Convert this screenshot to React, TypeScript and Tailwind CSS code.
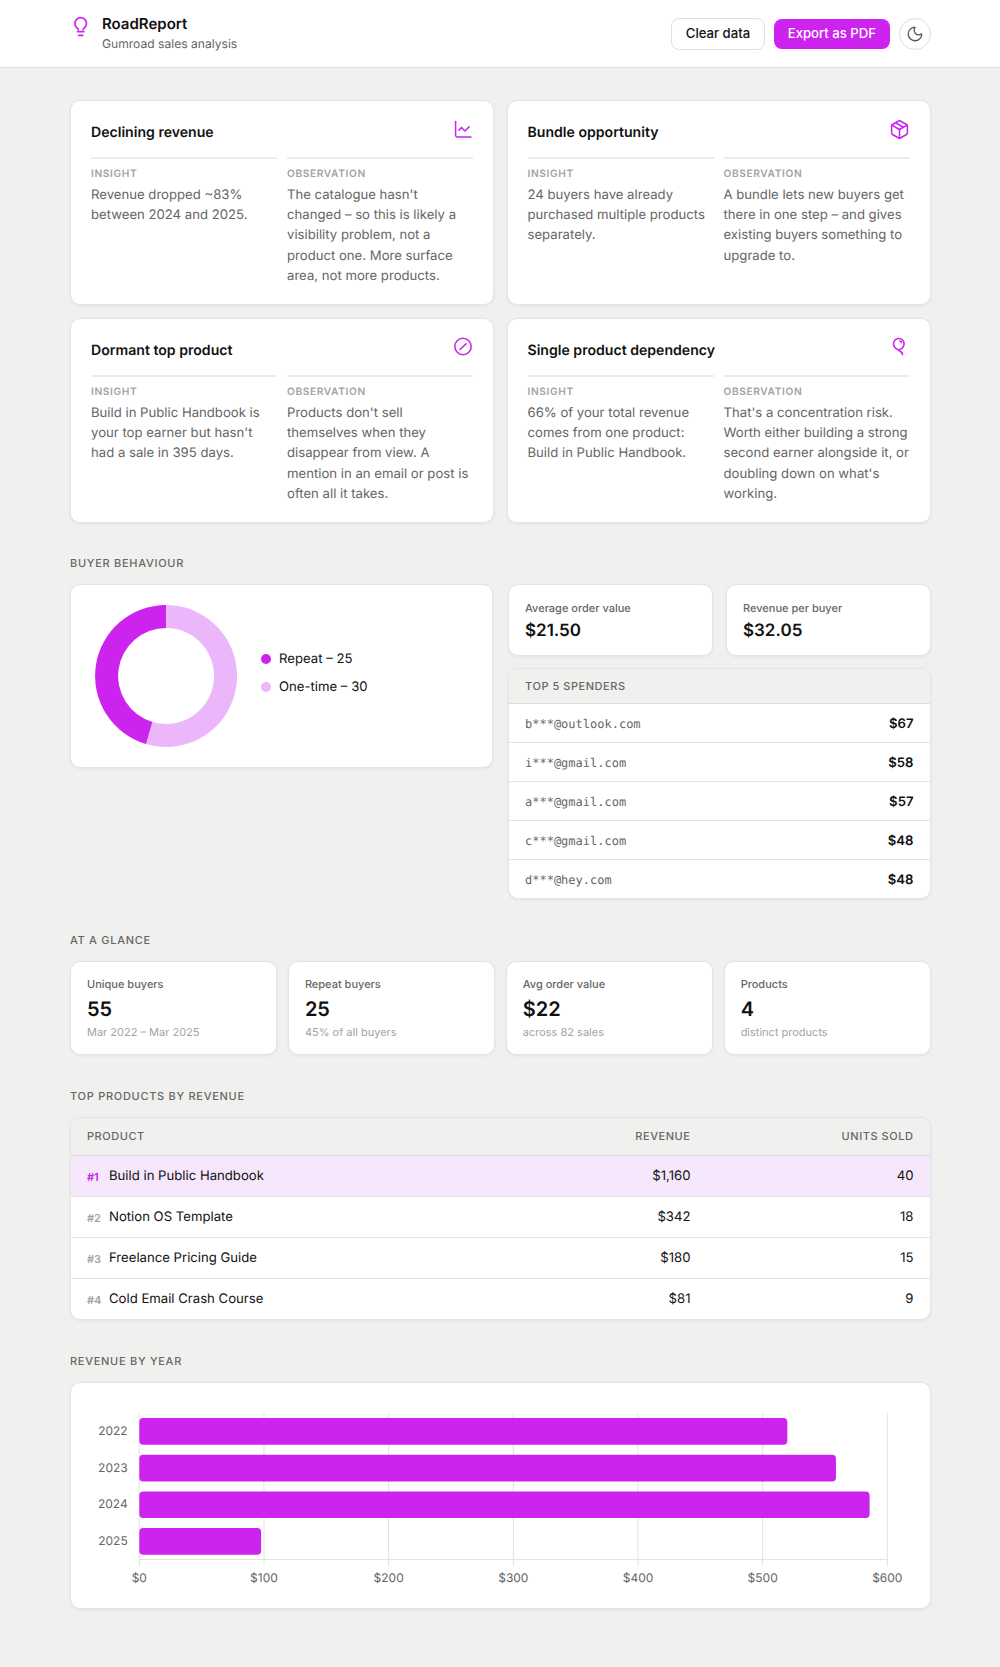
import { ChartLine, Moon, Package } from 'lucide-react'

const FONT = 'font-["Inter",sans-serif] [text-rendering:geometricPrecision]'

const insights = [
  {
    title: 'Declining revenue',
    icon: <ChartLine className="w-[20.5px] h-[20.5px]" strokeWidth={1.8} />,
    insight: 'Revenue dropped ~83% between 2024 and 2025.',
    observation:
      "The catalogue hasn't changed – so this is likely a visibility problem, not a product one. More surface area, not more products.",
  },
  {
    title: 'Bundle opportunity',
    icon: <Package className="w-[21px] h-[21px]" strokeWidth={1.8} />,
    insight: '24 buyers have already purchased multiple products separately.',
    observation:
      'A bundle lets new buyers get there in one step – and gives existing buyers something to upgrade to.',
  },
  {
    title: 'Dormant top product',
    icon: <GaugeIcon />,
    insight: "Build in Public Handbook is your top earner but hasn't had a sale in 395 days.",
    observation:
      "Products don't sell themselves when they disappear from view. A mention in an email or post is often all it takes.",
  },
  {
    title: 'Single product dependency',
    icon: <BalloonIcon />,
    insight: '66% of your total revenue comes from one product: Build in Public Handbook.',
    observation:
      "That's a concentration risk. Worth either building a strong second earner alongside it, or doubling down on what's working.",
  },
]

const spenders = [
  ['b***@outlook.com', '$67'],
  ['i***@gmail.com', '$58'],
  ['a***@gmail.com', '$57'],
  ['c***@gmail.com', '$48'],
  ['d***@hey.com', '$48'],
]

const glance = [
  ['Unique buyers', '55', 'Mar 2022 – Mar 2025'],
  ['Repeat buyers', '25', '45% of all buyers'],
  ['Avg order value', '$22', 'across 82 sales'],
  ['Products', '4', 'distinct products'],
]

const products = [
  ['#1', 'Build in Public Handbook', '$1,160', '40'],
  ['#2', 'Notion OS Template', '$342', '18'],
  ['#3', 'Freelance Pricing Guide', '$180', '15'],
  ['#4', 'Cold Email Crash Course', '$81', '9'],
]

const card = 'bg-white rounded-[10px] border border-[#e4e4e2] shadow-[0_1px_3px_rgba(0,0,0,0.06)]'

function BulbIcon() {
  return (
    <svg viewBox="0 0 16 24" fill="none" stroke="#cc23ee" strokeWidth="1.7" strokeLinecap="round" strokeLinejoin="round" className="w-[16px] h-[24px] ml-[3px] shrink-0">
      <path d="M5.2 15.6c0-.9-.8-1.2-1.6-2a5.8 5.8 0 1 1 8.2 0c-.8.8-1.6 1.1-1.6 2" />
      <path d="M4.6 17.7h6.2" />
      <path d="M5.6 21.3h4.2" />
    </svg>
  )
}

function GaugeIcon() {
  return (
    <svg viewBox="0 0 22 22" fill="none" stroke="#cc23ee" strokeWidth="1.6" strokeLinecap="round" className="w-[22px] h-[22px]">
      <circle cx="12" cy="9.5" r="8.2" />
      <path d="M9 12.5 15 6.8" />
    </svg>
  )
}

function BalloonIcon() {
  return (
    <svg viewBox="0 0 22 22" fill="none" stroke="#cc23ee" strokeWidth="1.6" strokeLinecap="round" strokeLinejoin="round" className="w-[22px] h-[22px]">
      <path d="M10.8 13C7.5 12 5.5 9.5 5.5 6.8a5.3 5.3 0 0 1 10.6 0c0 2.7-2 5.2-5.3 6.2z" />
      <path d="M12 4c.8.2 1.3.7 1.5 1.5" />
      <path d="M10.8 13c-.5 1.5 4 1.2 3.6 4.6" />
    </svg>
  )
}

function SectionLabel({ children }: { children: string }) {
  return (
    <h2 className="text-[11px] leading-[14px] font-medium tracking-[0.065em] uppercase text-[#666664] mb-[14px]">
      {children}
    </h2>
  )
}

function InsightCard({ title, icon, insight, observation }: (typeof insights)[number]) {
  return (
    <div className={`${card} h-[205px] px-5 pt-[21px]`}>
      <div className="flex justify-between h-[35px]">
        <h3 className="text-[14.1px] leading-5 font-semibold text-[#111] pt-[1px]">{title}</h3>
        <span className="text-[#cc23ee] -mt-[3px] h-fit">{icon}</span>
      </div>
      <div className="grid grid-cols-2 gap-[10px]">
        <Column label="Insight" text={insight} />
        <Column label="Observation" text={observation} />
      </div>
    </div>
  )
}

function Column({ label, text }: { label: string; text: string }) {
  return (
    <div className="border-t-2 border-[#ececea] pt-[8px]">
      <div className="text-[10.2px] leading-[14px] font-semibold tracking-[0.06em] uppercase text-[#a3a3a1] mb-[3.5px]">
        {label}
      </div>
      <p className="text-[13.15px] leading-[20.4px] text-[#666664]">{text}</p>
    </div>
  )
}

function Donut() {
  return (
    <svg viewBox="0 0 142 142" className="w-[142px] h-[142px] shrink-0">
      <path d="M71 0A71 71 0 1 1 51 139.1L57.4 117A48 48 0 1 0 71 23Z" fill="#ecb6fa" />
      <path d="M51 139.1A71 71 0 0 1 71 0V23A48 48 0 0 0 57.4 117Z" fill="#cc23ee" />
    </svg>
  )
}

function RevenueChart() {
  const years = [
    ['2022', 519.8],
    ['2023', 558.8],
    ['2024', 585.8],
    ['2025', 97.7],
  ] as const
  const x0 = 68.3
  const unit = 1.2467
  const ticks = [0, 100, 200, 300, 400, 500, 600]
  return (
    <svg viewBox="0 0 858.5 224" className="w-full h-[224px] block">
      {ticks.map((t) => (
        <g key={t}>
          <line x1={x0 + t * unit} x2={x0 + t * unit} y1="30" y2="183" stroke="#e2e2e0" />
          <text x={x0 + t * unit} y="199" textAnchor="middle" fontSize="12" fill="#666664">
            ${t}
          </text>
        </g>
      ))}
      <line x1={x0} x2={x0 + 600 * unit} y1="176.5" y2="176.5" stroke="#e2e2e0" />
      {years.map(([year, value], i) => (
        <g key={year}>
          <rect x={x0} y={35 + i * 36.7} width={value * unit} height="26.7" rx="4" fill="#cc23ee" />
          <text x={x0 - 11.6} y={52 + i * 36.7} textAnchor="end" fontSize="12" fill="#666664">
            {year}
          </text>
        </g>
      ))}
    </svg>
  )
}

export default function App() {
  return (
    <div className={`${FONT} min-h-[1667px] bg-[#f0f0ee] text-[#111]`}>
      <header className="h-[68px] bg-white border-b border-[#dddddb] flex items-center justify-between pl-[70px] pr-[69.5px]">
        <div className="flex items-start gap-[13px]">
          <BulbIcon />
          <div>
            <div className="text-[15px] leading-[20px] font-semibold">RoadReport</div>
            <div className="text-[12.1px] leading-[18px] text-[#666664] mt-[0.5px]">Gumroad sales analysis</div>
          </div>
        </div>
        <div className="flex items-center gap-[8.5px]">
          <button className="h-[32px] px-[14px] rounded-[8px] border border-[#dfdfdd] bg-white text-[13.15px] font-medium">
            Clear data
          </button>
          <button className="h-[30px] px-[14px] rounded-[8px] bg-[#cc23ee] text-white text-[13.15px] font-medium">
            Export as PDF
          </button>
          <button className="w-[32px] h-[32px] rounded-full border border-[#dfdfdd] flex items-center justify-center text-[#555]">
            <Moon className="w-[18px] h-[18px]" strokeWidth={1.7} />
          </button>
        </div>
      </header>

      <main className="pl-[70px] pr-[69.5px] pt-[32px]">
        <div className="grid grid-cols-2 gap-x-[12.5px] gap-y-[13px]">
          {insights.map((item) => (
            <InsightCard key={item.title} {...item} />
          ))}
        </div>

        <section className="mt-[33px]">
          <SectionLabel>Buyer behaviour</SectionLabel>
          <div className="flex justify-between items-start">
            <div className={`${card} w-[423px] h-[184px] flex items-center pl-[24px] gap-[24px]`}>
              <Donut />
              <ul className="flex flex-col gap-[7.5px] text-[13.15px] leading-5 mb-[6px]">
                <li className="flex items-center gap-2">
                  <span className="w-[10px] h-[10px] rounded-full bg-[#cc23ee]" />
                  Repeat – 25
                </li>
                <li className="flex items-center gap-2">
                  <span className="w-[10px] h-[10px] rounded-full bg-[#ecb6fa]" />
                  One-time – 30
                </li>
              </ul>
            </div>

            <div className="w-[422.5px] flex flex-col gap-[12.5px]">
              <div className="grid grid-cols-2 gap-[13.5px]">
                <Stat label="Average order value" value="$21.50" />
                <Stat label="Revenue per buyer" value="$32.05" />
              </div>
              <div className={`${card} overflow-hidden`}>
                <div className="h-[35px] bg-[#f0f0ee] border-b border-[#dddddb] px-4 flex items-center text-[11px] font-medium tracking-[0.05em] uppercase text-[#666664]">
                  Top 5 spenders
                </div>
                {spenders.map(([email, amount]) => (
                  <div key={email} className="h-[38.9px] last:h-[38px] px-4 pt-[2px] flex items-center justify-between border-b last:border-b-0 border-[#e4e4e2]">
                    <span className='font-["DejaVu_Sans_Mono",monospace] text-[12px] text-[#666664]'>{email}</span>
                    <span className="text-[13.15px] font-semibold mt-[2px]">{amount}</span>
                  </div>
                ))}
              </div>
            </div>
          </div>
        </section>

        <section className="mt-[34px]">
          <SectionLabel>At a glance</SectionLabel>
          <div className="grid grid-cols-4 gap-[11px]">
            {glance.map(([label, value, note]) => (
              <div key={label} className={`${card} h-[94.5px] px-4 pt-[14px]`}>
                <div className="text-[11px] leading-[16px] font-medium text-[#666664]">{label}</div>
                <div className="text-[20px] leading-[28px] font-semibold mt-[3px]">{value}</div>
                <div className="text-[11px] leading-[16px] text-[#a3a3a1] mt-[1px]">{note}</div>
              </div>
            ))}
          </div>
        </section>

        <section className="mt-[34px]">
          <SectionLabel>Top products by revenue</SectionLabel>
          <div className={`${card} overflow-hidden`}>
            <div className="h-[37.5px] bg-[#f0f0ee] border-b border-[#dddddb] px-4 flex items-center text-[11px] font-medium tracking-[0.05em] uppercase text-[#666664]">
              <span className="flex-1">Product</span>
              <span className="w-[100px] text-right">Revenue</span>
              <span className="w-[223px] text-right">Units sold</span>
            </div>
            {products.map(([rank, name, revenue, units], i) => (
              <div
                key={rank}
                className={`h-[41px] last:h-[40.5px] px-4 pt-[3px] flex items-center border-b last:border-b-0 border-[#e4e4e2] text-[13.15px] ${i === 0 ? 'bg-[#f6e7fc]' : ''}`}
              >
                <span className={`w-[22px] text-[11px] font-semibold ${i === 0 ? 'text-[#cc23ee]' : 'text-[#a3a3a1]'}`}>{rank}</span>
                <span className="flex-1">{name}</span>
                <span className="w-[100px] text-right">{revenue}</span>
                <span className="w-[223px] text-right">{units}</span>
              </div>
            ))}
          </div>
        </section>

        <section className="mt-[33.5px]">
          <SectionLabel>Revenue by year</SectionLabel>
          <div className={`${card} h-[227.5px]`}>
            <RevenueChart />
          </div>
        </section>
      </main>
    </div>
  )
}

function Stat({ label, value }: { label: string; value: string }) {
  return (
    <div className={`${card} h-[71.5px] px-4 pt-[14.5px]`}>
      <div className="text-[11px] leading-[16px] font-medium text-[#666664]">{label}</div>
      <div className="text-[17px] leading-[24px] font-semibold mt-[3.5px]">{value}</div>
    </div>
  )
}
